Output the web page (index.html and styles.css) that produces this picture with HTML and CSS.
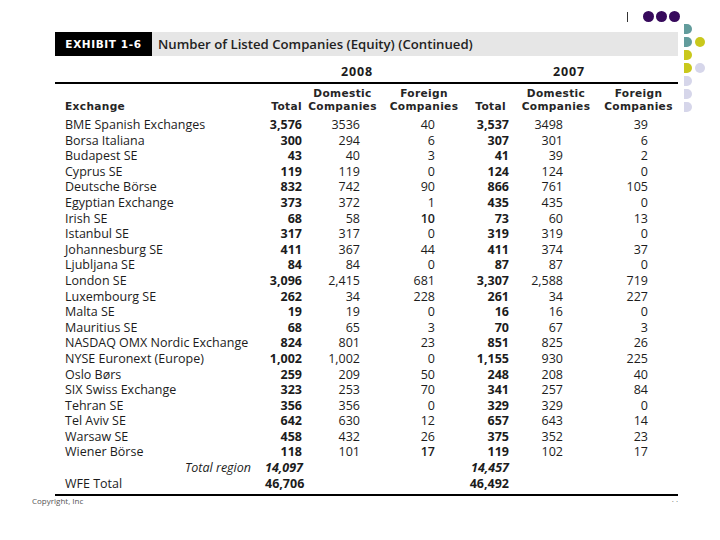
FILE: index.html
```html
<!DOCTYPE html>
<html lang="en">
<head>
<meta charset="utf-8">
<title>Exhibit 1-6</title>
<link rel="stylesheet" href="styles.css">
</head>
<body>
<div class="slide">
  <div class="deco">
    <div class="deco-top">
      <span class="vbar"></span>
      <span class="dot purple"></span>
      <span class="dot purple"></span>
      <span class="dot purple"></span>
    </div>
    <div class="deco-side">
      <div class="drow"><span class="half teal"></span></div>
      <div class="drow"><span class="half teal"></span><span class="dot yellow"></span></div>
      <div class="drow"><span class="half yellow"></span></div>
      <div class="drow"><span class="half yellow"></span><span class="dot lav"></span></div>
      <div class="drow"><span class="half lav"></span></div>
      <div class="drow"><span class="half lav"></span></div>
      <div class="drow"><span class="half lav"></span></div>
    </div>
  </div>

  <div class="exhibit">
    <div class="titlebar">
      <div class="label">EXHIBIT 1-6</div>
      <div class="title">Number of Listed Companies (Equity) (Continued)</div>
    </div>

    <div class="row years">
      <div></div>
      <div class="year y08">2008</div>
      <div class="year y07">2007</div>
    </div>

    <div class="row head">
      <div class="c1">Exchange</div>
      <div class="c2">Total</div>
      <div class="c3h">Domestic<br>Companies</div>
      <div class="c4h">Foreign<br>Companies</div>
      <div class="c5">Total</div>
      <div class="c6h">Domestic<br>Companies</div>
      <div class="c7h">Foreign<br>Companies</div>
    </div>

    <div class="body">
      <div class="row"><div class="c1">BME Spanish Exchanges</div><div class="c2">3,576</div><div class="c3">3536</div><div class="c4">40</div><div class="c5">3,537</div><div class="c6">3498</div><div class="c7">39</div></div>
      <div class="row"><div class="c1">Borsa Italiana</div><div class="c2">300</div><div class="c3">294</div><div class="c4">6</div><div class="c5">307</div><div class="c6">301</div><div class="c7">6</div></div>
      <div class="row"><div class="c1">Budapest SE</div><div class="c2">43</div><div class="c3">40</div><div class="c4">3</div><div class="c5">41</div><div class="c6">39</div><div class="c7">2</div></div>
      <div class="row"><div class="c1">Cyprus SE</div><div class="c2">119</div><div class="c3">119</div><div class="c4">0</div><div class="c5">124</div><div class="c6">124</div><div class="c7">0</div></div>
      <div class="row"><div class="c1">Deutsche Börse</div><div class="c2">832</div><div class="c3">742</div><div class="c4">90</div><div class="c5">866</div><div class="c6">761</div><div class="c7">105</div></div>
      <div class="row"><div class="c1">Egyptian Exchange</div><div class="c2">373</div><div class="c3">372</div><div class="c4">1</div><div class="c5">435</div><div class="c6">435</div><div class="c7">0</div></div>
      <div class="row"><div class="c1">Irish SE</div><div class="c2">68</div><div class="c3">58</div><div class="c4 b">10</div><div class="c5">73</div><div class="c6">60</div><div class="c7">13</div></div>
      <div class="row"><div class="c1">Istanbul SE</div><div class="c2">317</div><div class="c3">317</div><div class="c4">0</div><div class="c5">319</div><div class="c6">319</div><div class="c7">0</div></div>
      <div class="row"><div class="c1">Johannesburg SE</div><div class="c2">411</div><div class="c3">367</div><div class="c4">44</div><div class="c5">411</div><div class="c6">374</div><div class="c7">37</div></div>
      <div class="row"><div class="c1">Ljubljana SE</div><div class="c2">84</div><div class="c3">84</div><div class="c4">0</div><div class="c5">87</div><div class="c6">87</div><div class="c7">0</div></div>
      <div class="row"><div class="c1">London SE</div><div class="c2">3,096</div><div class="c3">2,415</div><div class="c4">681</div><div class="c5">3,307</div><div class="c6">2,588</div><div class="c7">719</div></div>
      <div class="row"><div class="c1">Luxembourg SE</div><div class="c2">262</div><div class="c3">34</div><div class="c4">228</div><div class="c5">261</div><div class="c6">34</div><div class="c7">227</div></div>
      <div class="row"><div class="c1">Malta SE</div><div class="c2">19</div><div class="c3">19</div><div class="c4">0</div><div class="c5">16</div><div class="c6">16</div><div class="c7">0</div></div>
      <div class="row"><div class="c1">Mauritius SE</div><div class="c2">68</div><div class="c3">65</div><div class="c4">3</div><div class="c5">70</div><div class="c6">67</div><div class="c7">3</div></div>
      <div class="row"><div class="c1">NASDAQ OMX Nordic Exchange</div><div class="c2">824</div><div class="c3">801</div><div class="c4">23</div><div class="c5">851</div><div class="c6">825</div><div class="c7">26</div></div>
      <div class="row"><div class="c1">NYSE Euronext (Europe)</div><div class="c2">1,002</div><div class="c3">1,002</div><div class="c4">0</div><div class="c5">1,155</div><div class="c6">930</div><div class="c7">225</div></div>
      <div class="row"><div class="c1">Oslo Børs</div><div class="c2">259</div><div class="c3">209</div><div class="c4">50</div><div class="c5">248</div><div class="c6">208</div><div class="c7">40</div></div>
      <div class="row"><div class="c1">SIX Swiss Exchange</div><div class="c2">323</div><div class="c3">253</div><div class="c4">70</div><div class="c5">341</div><div class="c6">257</div><div class="c7">84</div></div>
      <div class="row"><div class="c1">Tehran SE</div><div class="c2">356</div><div class="c3">356</div><div class="c4">0</div><div class="c5">329</div><div class="c6">329</div><div class="c7">0</div></div>
      <div class="row"><div class="c1">Tel Aviv SE</div><div class="c2">642</div><div class="c3">630</div><div class="c4">12</div><div class="c5">657</div><div class="c6">643</div><div class="c7">14</div></div>
      <div class="row"><div class="c1">Warsaw SE</div><div class="c2">458</div><div class="c3">432</div><div class="c4">26</div><div class="c5">375</div><div class="c6">352</div><div class="c7">23</div></div>
      <div class="row"><div class="c1">Wiener Börse</div><div class="c2">118</div><div class="c3">101</div><div class="c4 b">17</div><div class="c5">119</div><div class="c6">102</div><div class="c7">17</div></div>
      <div class="row total-region"><div class="c1">Total region</div><div class="c2">14,097</div><div></div><div></div><div class="c5">14,457</div><div></div><div></div></div>
      <div class="row"><div class="c1">WFE Total</div><div class="c2">46,706</div><div></div><div></div><div class="c5">46,492</div><div></div><div></div></div>
    </div>
  </div>

  <div class="footer">
    <span class="copy">Copyright, Inc</span>
    <span class="page">· ·</span>
  </div>
</div>
</body>
</html>
```

FILE: styles.css
```css
html, body {
  margin: 0;
  padding: 0;
  background: #ffffff;
}

.slide {
  position: relative;
  width: 720px;
  height: 540px;
  overflow: hidden;
  font-family: "Open Sans", "Noto Sans", sans-serif;
  color: #1c1c1c;
  padding-top: 32px;
  box-sizing: border-box;
}

/* decorative corner dots */
.deco-top {
  position: absolute;
  left: 627px;
  top: 11px;
  display: flex;
  align-items: center;
  gap: 2px;
}
.vbar {
  width: 1px;
  height: 10px;
  background: #333;
  margin-right: 13px;
}
.dot {
  width: 11px;
  height: 11px;
  border-radius: 50%;
  display: inline-block;
}
.purple { background: #370a5c; }
.deco-side {
  position: absolute;
  left: 684px;
  top: 24px;
  display: flex;
  flex-direction: column;
  gap: 3px;
}
.drow {
  height: 10px;
  display: flex;
  align-items: center;
  gap: 3px;
}
.half {
  width: 8px;
  height: 10px;
  border-radius: 0 5px 5px 0;
  display: inline-block;
}
.teal { background: #629c9c; }
.yellow { background: #c9c81c; }
.lav { background: #d6d6ea; }
.drow .dot { width: 10px; height: 10px; }

/* exhibit */
.exhibit {
  margin-left: 55px;
  width: 623px;
}

.titlebar {
  display: flex;
  height: 24px;
  background: #e6e6e6;
  align-items: stretch;
}
.label {
  width: 97px;
  background: #000;
  color: #fff;
  font-family: "DejaVu Sans", sans-serif;
  font-weight: 700;
  font-size: 10.5px;
  letter-spacing: 0.6px;
  display: flex;
  align-items: center;
  justify-content: center;
}
.title {
  padding-left: 6px;
  font-weight: 600;
  font-size: 13.2px;
  display: flex;
  align-items: center;
  color: #222;
}

.row {
  display: grid;
  grid-template-columns: 200px 36px 83px 80px 45px 94px 71px;
  padding-left: 10px;
  font-size: 12.5px;
  line-height: 15.6px;
  white-space: nowrap;
}

.years {
  height: 28px;
  align-items: end;
  border-bottom: 2px solid #000;
  box-sizing: border-box;
  padding-bottom: 3px;
  font-weight: 700;
  line-height: 14px;
  letter-spacing: 0.8px;
}
.y08 {
  grid-column: 2 / 5;
  text-align: center;
  padding-right: 15px;
}
.y07 {
  grid-column: 5 / 8;
  text-align: center;
}

.head {
  align-items: end;
  font-family: "DejaVu Sans", sans-serif;
  font-weight: 700;
  font-size: 10.6px;
  line-height: 12.5px;
  padding-top: 3px;
  padding-bottom: 5px;
  letter-spacing: 0.35px;
  color: #262626;
}
.head .c5 { padding-right: 3px; }
.c3h, .c4h, .c6h, .c7h { text-align: center; }

.c1 { text-align: left; }
.c2, .c3, .c4, .c5, .c6, .c7 { text-align: right; }
.c2, .c5 { font-weight: 700; }
.c2 { margin-right: -1px; }
.c3 { padding-right: 24px; }
.c4 { padding-right: 29px; }
.c6 { padding-right: 40px; }
.c7 { padding-right: 26px; }
.b { font-weight: 600; }

.body {
  border-bottom: 2px solid #000;
  padding-bottom: 3px;
}

.total-region .c1 {
  font-style: italic;
  text-align: right;
  padding-right: 14px;
}
.total-region .c2, .total-region .c5 {
  font-style: italic;
}

.footer {
  display: flex;
  justify-content: space-between;
  padding: 0 42px 0 32px;
  font-size: 8px;
  line-height: 10px;
  color: #555;
}
```
